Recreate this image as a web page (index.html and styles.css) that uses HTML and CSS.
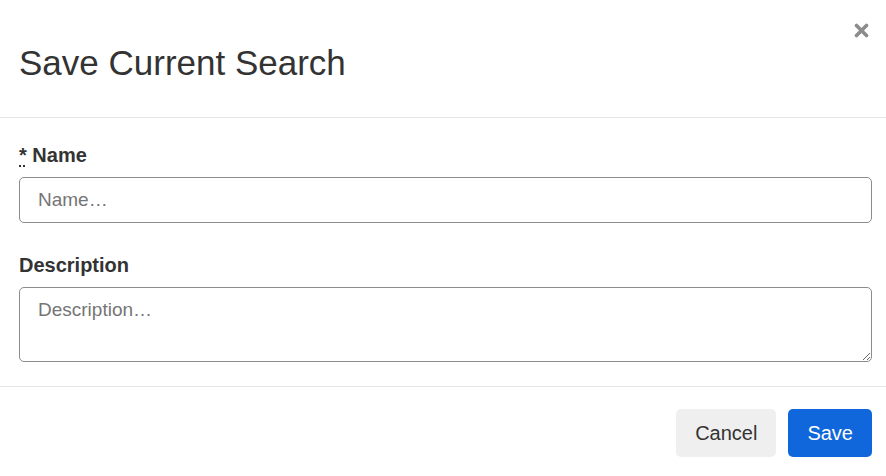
FILE: index.html
```html
<!DOCTYPE html>
<html lang="en">
<head>
<meta charset="utf-8">
<title>Save Current Search</title>
<link rel="stylesheet" href="styles.css">
</head>
<body>
<div class="modal">
  <header class="modal-header">
    <h1 class="modal-title">Save Current Search</h1>
    <button class="close" type="button" aria-label="Close">
      <svg width="15" height="15" viewBox="0 0 15 15"><path d="M2.5 2.5 L12.5 12.5 M12.5 2.5 L2.5 12.5" stroke="#8c8c8c" stroke-width="3.6" stroke-linecap="round"/></svg>
    </button>
  </header>
  <div class="modal-body">
    <label class="field-label" for="name"><abbr class="req" title="required">*</abbr> Name</label>
    <input class="field-input" id="name" type="text" placeholder="Name…">
    <label class="field-label second" for="desc">Description</label>
    <textarea class="field-input field-area" id="desc" placeholder="Description…"></textarea>
  </div>
  <footer class="modal-footer">
    <button class="btn btn-secondary" type="button">Cancel</button>
    <button class="btn btn-primary" type="button">Save</button>
  </footer>
</div>
</body>
</html>
```

FILE: styles.css
```css
html, body {
  margin: 0;
  padding: 0;
  background: #ffffff;
}
body {
  font-family: "Liberation Sans", Arial, sans-serif;
  color: #333333;
}
.modal {
  width: 886px;
  height: 476px;
  display: flex;
  flex-direction: column;
}
.modal-header {
  position: relative;
  padding: 41px 14px 33px 19px;
  border-bottom: 1px solid #e5e5e5;
}
.modal-title {
  margin: 0;
  font-size: 35px;
  line-height: 43px;
  font-weight: 400;
  color: #333333;
}
.close {
  position: absolute;
  top: 23px;
  right: 17px;
  width: 15px;
  height: 15px;
  padding: 0;
  border: 0;
  background: none;
  display: flex;
  cursor: pointer;
}
.modal-body {
  display: flex;
  flex-direction: column;
  padding: 22px 14px 24px 19px;
}
.field-label {
  font-size: 20px;
  line-height: 30px;
  font-weight: 700;
  color: #333333;
}
.field-label.second {
  margin-top: 27px;
}
.req {
  text-decoration: underline dotted;
  text-underline-offset: 3px;
  font-weight: 700;
}
.field-input {
  margin-top: 7px;
  box-sizing: border-box;
  width: 100%;
  height: 46px;
  padding: 0 18px;
  border: 1px solid #8c8c8c;
  border-radius: 5px;
  font-family: "Liberation Sans", Arial, sans-serif;
  font-size: 19px;
  color: #333333;
  background: #ffffff;
  outline: none;
}
.field-input::placeholder {
  color: #757575;
}
.field-area {
  height: 75px;
  padding: 8px 18px;
  line-height: 28px;
  resize: vertical;
  display: block;
}
.modal-footer {
  border-top: 1px solid #e5e5e5;
  padding: 22px 14px 19px 19px;
  display: flex;
  justify-content: flex-end;
  gap: 12px;
}
.btn {
  height: 48px;
  padding: 0 19px;
  border: 0;
  border-radius: 5px;
  font-family: "Liberation Sans", Arial, sans-serif;
  font-size: 20px;
  cursor: pointer;
}
.btn-secondary {
  background: #efefef;
  color: #333333;
}
.btn-primary {
  background: #1067db;
  color: #ffffff;
}
```
